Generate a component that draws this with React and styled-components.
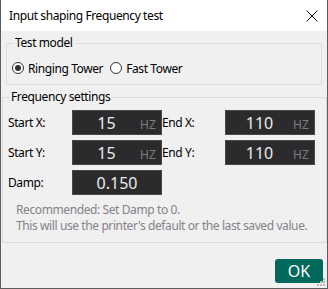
import * as React from 'react'
import styled, { createGlobalStyle } from 'styled-components'

const GlobalStyle = createGlobalStyle`
  html, body {
    margin: 0;
    padding: 0;
    background: #f0f0f0;
  }
  body {
    font-family: "Noto Sans", "Liberation Sans", sans-serif;
    font-size: 12px;
    letter-spacing: -0.4px;
    color: #000;
  }
`

const Window = styled.div`
  position: relative;
  width: 328px;
  height: 289px;
  box-sizing: border-box;
  border: 1px solid #5c5c5c;
  border-top: none;
  background: #f0f0f0;
  display: flex;
  flex-direction: column;
`

const TitleBar = styled.div`
  height: 31px;
  background: #fff;
  display: flex;
  align-items: center;
  justify-content: space-between;
  padding: 0 9px 0 8px;
`

const Title = styled.span`
  font-size: 12px;
  line-height: 16px;
`

const CloseButton = styled.div`
  width: 13px;
  height: 13px;
  display: flex;
  align-items: center;
  justify-content: center;
`

const GroupBox = styled.div`
  position: relative;
  box-sizing: border-box;
  border: 1px solid #dcdcdc;
  margin: ${p => p.$margin};
  height: ${p => p.$height}px;
  padding: ${p => p.$padding};
`

const Legend = styled.span`
  position: absolute;
  top: -9px;
  left: ${p => p.$left}px;
  padding: 0 2px;
  background: #f0f0f0;
  line-height: 16px;
`

const RadioRow = styled.div`
  display: flex;
  align-items: center;
  height: 16px;
`

const RadioLabel = styled.label`
  display: flex;
  align-items: center;
  gap: 4px;
  margin-right: 7px;
`

const RadioCircle = styled.span`
  width: 12px;
  height: 12px;
  box-sizing: border-box;
  border-radius: 50%;
  border: 1px solid #333;
  background: #fff;
  display: flex;
  align-items: center;
  justify-content: center;

  &::after {
    content: '';
    width: 6px;
    height: 6px;
    border-radius: 50%;
    background: ${p => (p.$checked ? '#333' : 'transparent')};
  }
`

const FieldGrid = styled.div`
  display: grid;
  grid-template-columns: 64px 90px 63px 90px;
  grid-auto-rows: 25px;
  row-gap: 5px;
  align-items: center;
`

const FieldLabel = styled.span`
  line-height: 16px;
`

const ValueBox = styled.div`
  height: 25px;
  box-sizing: border-box;
  border: 1px solid #484848;
  background: #2b2b2e;
  display: grid;
  grid-template-columns: ${p => (p.$unit ? '67px 1fr' : '1fr')};
  align-items: center;
`

const Value = styled.span`
  text-align: center;
  color: #ececec;
  font-size: 16px;
  line-height: 20px;
  letter-spacing: 0;
`

const Unit = styled.span`
  justify-self: end;
  padding-right: 11px;
  color: #7c7c7c;
  font-size: 12px;
  letter-spacing: 0;
  padding-top: 3px;
`

const Note = styled.div`
  margin-top: 7px;
  padding-left: 8px;
  color: #85828a;
  white-space: nowrap;
`

const NoteLine = styled.div`
  line-height: 16px;
`

const Footer = styled.div`
  display: flex;
  justify-content: flex-end;
  padding: 16px 4px 0 0;
`

const OkButton = styled.button`
  width: 48px;
  height: 24px;
  border: none;
  border-radius: 3px;
  background: #00695b;
  color: #fff;
  font-family: inherit;
  font-size: 16px;
  line-height: 20px;
  padding: 0;
`

const Grip = styled.svg`
  position: absolute;
  right: 1px;
  bottom: 1px;
`

function Field({ label, value, unit }) {
  return (
    <>
      <FieldLabel>{label}</FieldLabel>
      <ValueBox $unit={!!unit}>
        <Value>{value}</Value>
        {unit && <Unit>{unit}</Unit>}
      </ValueBox>
    </>
  )
}

export default function App() {
  return (
    <>
      <GlobalStyle />
      <Window>
        <TitleBar>
          <Title>Input shaping Frequency test</Title>
          <CloseButton>
            <svg width="12" height="12" viewBox="0 0 12 12">
              <path d="M0.5 0.5 L11.5 11.5 M11.5 0.5 L0.5 11.5" stroke="#111" strokeWidth="1" />
            </svg>
          </CloseButton>
        </TitleBar>

        <GroupBox $margin="12px 5px 0 5px" $height={42} $padding="16px 0 0 5px">
          <Legend $left={6}>Test model</Legend>
          <RadioRow>
            <RadioLabel>
              <RadioCircle $checked />
              Ringing Tower
            </RadioLabel>
            <RadioLabel>
              <RadioCircle />
              Fast Tower
            </RadioLabel>
          </RadioRow>
        </GroupBox>

        <GroupBox $margin="12px 0 0 1px" $height={146} $padding="12px 0 0 5px">
          <Legend $left={6}>Frequency settings</Legend>
          <FieldGrid>
            <Field label="Start X:" value="15" unit="HZ" />
            <Field label="End X:" value="110" unit="HZ" />
            <Field label="Start Y:" value="15" unit="HZ" />
            <Field label="End Y:" value="110" unit="HZ" />
            <Field label="Damp:" value="0.150" />
          </FieldGrid>
          <Note>
            <NoteLine>Recommended: Set Damp to 0.</NoteLine>
            <NoteLine>This will use the printer's default or the last saved value.</NoteLine>
          </Note>
        </GroupBox>

        <Footer>
          <OkButton>OK</OkButton>
        </Footer>

        <Grip width="10" height="10" viewBox="0 0 10 10">
          {[[7, 1], [4, 4], [7, 4], [1, 7], [4, 7], [7, 7]].map(([x, y]) => (
            <rect key={`${x}-${y}`} x={x} y={y} width="2" height="2" fill="#b8b8b8" />
          ))}
        </Grip>
      </Window>
    </>
  )
}
